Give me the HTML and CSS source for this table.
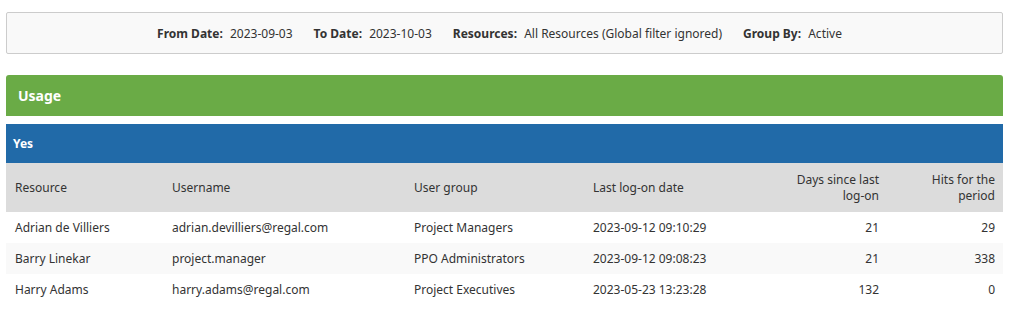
FILE: index.html
```html
<!DOCTYPE html>
<html lang="en">
<head>
  <meta charset="UTF-8" />
  <title>Usage Report</title>
  <link rel="stylesheet" href="styles.css">
</head>
<body>
  <div class="filters">
    <span class="filter"><b>From Date:</b> 2023-09-03</span>
    <span class="filter"><b>To Date:</b> 2023-10-03</span>
    <span class="filter"><b>Resources:</b> All Resources (Global filter ignored)</span>
    <span class="filter"><b>Group By:</b> Active</span>
  </div>

  <div class="panel">
    <div class="panel-heading">Usage</div>
  </div>

  <div class="group-heading">Yes</div>
  <table class="report">
    <colgroup>
      <col class="c-resource">
      <col class="c-username">
      <col class="c-group">
      <col class="c-date">
      <col class="c-days">
      <col class="c-hits">
    </colgroup>
    <thead>
      <tr>
        <th>Resource</th>
        <th>Username</th>
        <th>User group</th>
        <th>Last log-on date</th>
        <th class="num">Days since last log-on</th>
        <th class="num">Hits for the period</th>
      </tr>
    </thead>
    <tbody>
      <tr>
        <td>Adrian de Villiers</td>
        <td>adrian.devilliers@regal.com</td>
        <td>Project Managers</td>
        <td>2023-09-12 09:10:29</td>
        <td class="num">21</td>
        <td class="num">29</td>
      </tr>
      <tr>
        <td>Barry Linekar</td>
        <td>project.manager</td>
        <td>PPO Administrators</td>
        <td>2023-09-12 09:08:23</td>
        <td class="num">21</td>
        <td class="num">338</td>
      </tr>
      <tr>
        <td>Harry Adams</td>
        <td>harry.adams@regal.com</td>
        <td>Project Executives</td>
        <td>2023-05-23 13:23:28</td>
        <td class="num">132</td>
        <td class="num">0</td>
      </tr>
    </tbody>
  </table>
</body>
</html>
```

FILE: styles.css
```css
* {
  box-sizing: border-box;
}

body {
  margin: 0;
  padding: 12px 12px 0 6px;
  font-family: "Noto Sans", "Open Sans", sans-serif;
  font-size: 12px;
  color: #333;
  background: #fff;
}

/* Filter summary */
.filters {
  height: 42px;
  display: flex;
  justify-content: center;
  align-items: center;
  gap: 21px;
  padding-right: 10px;
  background: #f9f9f9;
  border: 1px solid #ccc;
  border-radius: 2px;
  color: #333;
}

.filter b {
  margin-right: 4px;
}

/* Green panel */
.panel {
  margin-top: 21px;
  border-bottom: 1px solid #6aab46;
}

.panel-heading {
  height: 40px;
  display: flex;
  align-items: center;
  padding-left: 12px;
  background: #6aab46;
  border-radius: 3px 3px 0 0;
  color: #fff;
  font-weight: 700;
  font-size: 14px;
}

/* Group row */
.group-heading {
  margin-top: 8px;
  height: 39px;
  display: flex;
  align-items: center;
  padding-left: 7px;
  background: #216aa8;
  color: #fff;
  font-weight: 700;
  font-size: 12px;
}

/* Report table */
.report {
  width: 100%;
  border-collapse: collapse;
  table-layout: fixed;
}

.c-resource { width: 157px; }
.c-username { width: 242px; }
.c-group { width: 179px; }
.c-date { width: 186px; }
.c-days { width: 117px; }
.c-hits { width: 116px; }

.report th {
  background: #dcdcdc;
  font-weight: 400;
  text-align: left;
  height: 49px;
  padding: 0 8px 0 9px;
  line-height: 16px;
}

.report td {
  height: 31px;
  padding: 0 8px 0 9px;
  white-space: nowrap;
}

.report tbody tr:nth-child(even) td {
  background: #f9f9f9;
}

.report .num {
  text-align: right;
}
```
